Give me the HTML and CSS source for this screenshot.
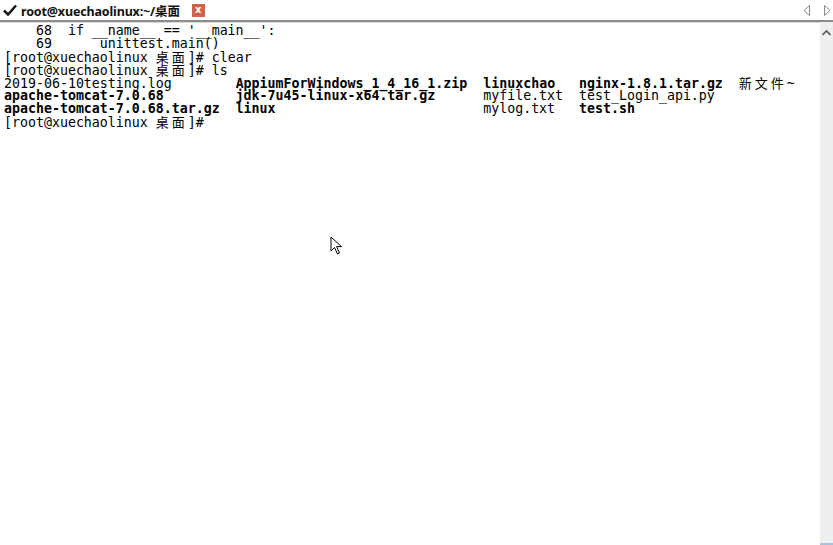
FILE: index.html
```html
<!DOCTYPE html>
<html>
<head>
<meta charset="utf-8">
<link rel="stylesheet" href="styles.css">
</head>
<body>
<div class="window">
  <div class="tabbar">
    <div class="tab">
      <svg class="check" width="14" height="12" viewBox="0 0 14 12"><path d="M1 6.5 L5 10.5 L13 1.5" fill="none" stroke="#1a1a1a" stroke-width="2.6"/></svg>
      <span class="tab-title">root@xuechaolinux:~/桌面</span>
      <span class="close">x</span>
    </div>
    <div class="tab-arrows">
      <svg width="8" height="11" viewBox="0 0 8 11"><path d="M6.5 0.5 L1 5.5 L6.5 10.5 Z" fill="none" stroke="#8a8a8a"/></svg>
      <svg width="8" height="11" viewBox="0 0 8 11"><path d="M1.5 0.5 L7 5.5 L1.5 10.5 Z" fill="none" stroke="#8a8a8a"/></svg>
    </div>
  </div>
  <div class="main">
    <div class="term">
      <div class="line">    68  if __name__ == '__main__':</div>
      <div class="line">    69      unittest.main()</div>
      <div class="line">[root@xuechaolinux <span class="cjk">桌面</span>]# clear</div>
      <div class="line">[root@xuechaolinux <span class="cjk">桌面</span>]# ls</div>
      <div class="line">2019-06-10testing.log        <b>AppiumForWindows_1_4_16_1.zip</b>  <b>linuxchao</b>   <b>nginx-1.8.1.tar.gz</b>  <span class="cjk">新文件</span>~</div>
      <div class="line"><b>apache-tomcat-7.0.68</b>         <b>jdk-7u45-linux-x64.tar.gz</b>      myfile.txt  test_Login_api.py</div>
      <div class="line"><b>apache-tomcat-7.0.68.tar.gz</b>  <b>linux</b>                          mylog.txt   <b>test.sh</b></div>
      <div class="line">[root@xuechaolinux <span class="cjk">桌面</span>]# </div>
    </div>
    <div class="scrollbar">
      <svg class="up" width="9" height="6" viewBox="0 0 9 6"><path d="M0.5 5 L4.5 1 L8.5 5" fill="none" stroke="#555" stroke-width="1.6"/></svg>
      <div class="thumb"></div>
    </div>
  </div>
  <svg class="pointer" width="14" height="20" viewBox="0 0 14 20"><path d="M1 1 L1 15 L4.5 11.5 L7.5 18 L9.5 17 L6.6 10.6 L11.5 10.6 Z" fill="#fff" stroke="#000" stroke-width="1" stroke-linejoin="miter"/></svg>
</div>
</body>
</html>
```
FILE: styles.css
```css
html, body {
  margin: 0;
  padding: 0;
  background: #fff;
}
.window {
  position: relative;
  width: 833px;
  height: 545px;
  display: flex;
  flex-direction: column;
  overflow: hidden;
}
.tabbar {
  height: 20px;
  display: flex;
  justify-content: space-between;
  align-items: center;
  border-bottom: 2px solid #8c8c8c;
  box-shadow: 0 1px 0 #d8d8d8;
  flex: none;
}
.tab {
  display: flex;
  align-items: center;
  height: 20px;
  padding-left: 3px;
}
.check {
  margin-right: 4px;
}
.tab-title {
  font-family: "Noto Sans", "Noto Sans CJK SC", sans-serif;
  font-weight: bold;
  font-size: 12.5px;
  color: #111;
  letter-spacing: -0.15px;
}
.close {
  margin-left: 12px;
  width: 13px;
  height: 13px;
  background: #d0634a;
  color: #fff;
  font-family: "DejaVu Sans", sans-serif;
  font-size: 10px;
  font-weight: bold;
  line-height: 11px;
  text-align: center;
}
.tab-arrows {
  display: flex;
  gap: 12px;
  padding-right: 2px;
  align-items: center;
}
.main {
  flex: 1;
  display: flex;
  min-height: 0;
}
.term {
  flex: 1;
  padding: 2px 0 0 4px;
  font-family: "DejaVu Sans Mono", monospace;
  font-size: 13.28px;
  line-height: 13px;
  color: #000;
}
.line {
  height: 13px;
  white-space: pre;
}
.term b {
  font-weight: bold;
}
.cjk {
  font-family: "Noto Sans CJK SC", sans-serif;
  font-size: 13px;
  line-height: 13px;
  letter-spacing: 3px;
}
.scrollbar {
  width: 13px;
  flex: none;
  background: #efefef;
  display: flex;
  flex-direction: column;
  align-items: center;
  justify-content: space-between;
}
.up {
  margin-top: 8px;
}
.thumb {
  width: 13px;
  height: 2px;
  background: #a9c2d9;
}
.pointer {
  position: absolute;
  left: 330px;
  top: 236px;
}
```
